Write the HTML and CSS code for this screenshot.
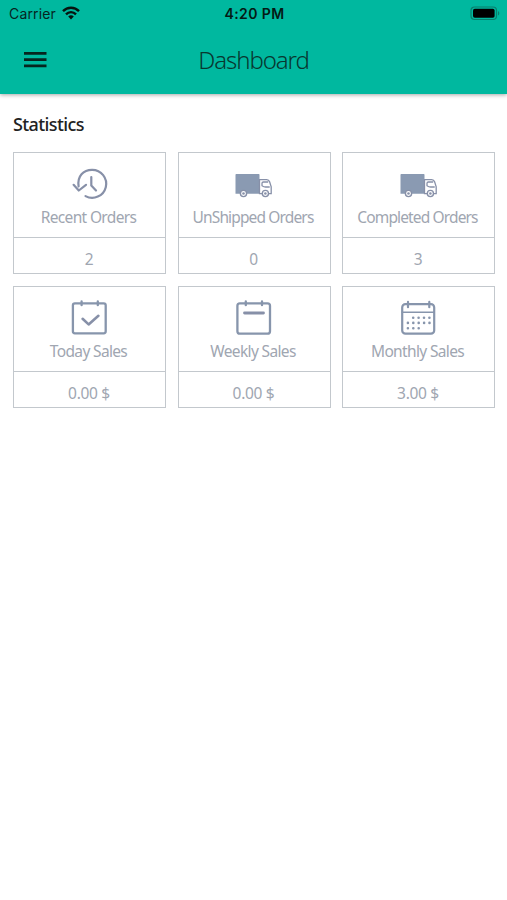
FILE: index.html
```html
<!DOCTYPE html>
<html lang="en">
<head>
<meta charset="utf-8">
<meta name="viewport" content="width=device-width, initial-scale=1">
<title>Dashboard</title>
<link rel="stylesheet" href="styles.css">
</head>
<body>
<header class="header">
  <div class="status">
    <div class="carrier"><span class="carrier-name">Carrier</span>
      <svg class="wifi" width="18" height="14" viewBox="0 0 18 14" fill="none" stroke="#06140f" stroke-width="2.4"><path d="M1 5.200C5.400.6 12.600 .6 17 5.200"/><path d="M4 8.300c2.800-2.900 7.200-2.900 10 0"/><path d="M6.200 10.400c1.700-1.500 3.900-1.500 5.600 0L9 13.400z" fill="#06140f" stroke="none"/></svg>
    </div>
    <span class="time">4:20 PM</span>
    <svg class="battery" width="30" height="15" viewBox="0 0 30 15"><rect x="1" y="1" width="25.500" height="12.500" rx="3.500" fill="none" stroke="#087f6d" stroke-width="1.200"/><rect x="3" y="2.800" width="21.600" height="9" rx="1.800" fill="#000"/><path d="M28 5v4.600c1.800-.8 1.800-3.800 0-4.600z" fill="#087f6d"/></svg>
  </div>
  <div class="toolbar">
    <svg class="menu" width="23" height="16" viewBox="0 0 23 16" fill="#06251f"><path d="M0 0h22.500v2.700H0zM0 6.200h22.500v2.700H0zM0 12.500h22.500v2.700H0z"/></svg>
    <h1 class="title">Dashboard</h1>
  </div>
</header>
<main class="content">
  <h2 class="heading">Statistics</h2>
  <div class="grid">
    <section class="card"><div class="top">
      <svg class="icon" viewBox="0 0 40 40" fill="none" stroke="#8790a8" stroke-width="2.200" stroke-linecap="round" stroke-linejoin="round"><path d="M9.600 23.500C8 13 14.500 6.800 23 6.800a14 14 0 1 1-6.500 26.300"/><path d="M4.600 21.800l5.200 5.700 7.200-5.700M22.300 14v8.500l4.700 5"/></svg>
      <span class="label">Recent Orders</span></div><div class="value">2</div></section>
    <section class="card"><div class="top">
      <svg class="icon" viewBox="0 0 40 40"><path d="M3.500 11h22c.7 0 1 .4 1 1v18.700H2.500V12c0-.6.4-1 1-1z" fill="#8a9ab2"/><path d="M26.500 16.600h7.200c1.500 0 2.400.8 2.900 2.200l1.600 5v6.900H26.500zM35.200 19h-4.800c-1 0-1.400.5-1.400 1.200v2.500c1.200.8 2 1.300 3.500 1.300h4.200" fill="#fff" stroke="#8790a8" stroke-width="1.300"/><g fill="#fff" stroke="#8790a8" stroke-width="1.400"><circle cx="10.500" cy="30.500" r="3.100"/><circle cx="32.400" cy="30.500" r="3.100"/></g><g fill="#8790a8"><circle cx="10.500" cy="30.500" r="1.300"/><circle cx="32.400" cy="30.500" r="1.300"/></g></svg>
      <span class="label long">UnShipped Orders</span></div><div class="value">0</div></section>
    <section class="card"><div class="top">
      <svg class="icon" viewBox="0 0 40 40"><path d="M3.500 11h22c.7 0 1 .4 1 1v18.700H2.500V12c0-.6.4-1 1-1z" fill="#8a9ab2"/><path d="M26.500 16.600h7.200c1.500 0 2.400.8 2.900 2.200l1.600 5v6.900H26.500zM35.200 19h-4.800c-1 0-1.400.5-1.400 1.200v2.500c1.200.8 2 1.300 3.500 1.300h4.200" fill="#fff" stroke="#8790a8" stroke-width="1.300"/><g fill="#fff" stroke="#8790a8" stroke-width="1.400"><circle cx="10.500" cy="30.500" r="3.100"/><circle cx="32.400" cy="30.500" r="3.100"/></g><g fill="#8790a8"><circle cx="10.500" cy="30.500" r="1.300"/><circle cx="32.400" cy="30.500" r="1.300"/></g></svg>
      <span class="label long">Completed Orders</span></div><div class="value">3</div></section>
    <section class="card"><div class="top">
      <svg class="icon" viewBox="0 0 40 40" fill="none" stroke="#8795ac" stroke-width="2.300" stroke-linecap="round" stroke-linejoin="round"><rect x="3.900" y="6.300" width="32.800" height="30" rx="2"/><path d="M12.600 4.400v3.800M28.800 4.400v3.800"/><path d="M13.600 21.800l6 5.600 9.800-8.600" stroke-width="2.600" stroke="#8790a8"/></svg>
      <span class="label">Today Sales</span></div><div class="value">0.00 $</div></section>
    <section class="card"><div class="top">
      <svg class="icon" viewBox="0 0 40 40" fill="none" stroke="#8795ac" stroke-width="2.300" stroke-linecap="round" stroke-linejoin="round"><rect x="4.400" y="6.300" width="32.600" height="30.400" rx="2.500"/><path d="M12.800 4.400v3.800M29 4.400v3.800"/><path d="M11.500 16h19" stroke-width="2.800" stroke="#8790a8"/></svg>
      <span class="label">Weekly Sales</span></div><div class="value">0.00 $</div></section>
    <section class="card"><div class="top">
      <svg class="icon" viewBox="0 0 40 40" fill="none" stroke="#8795ac" stroke-width="2.200" stroke-linecap="round" stroke-linejoin="round"><rect x="4.200" y="7.200" width="32" height="29.500" rx="3.200"/><path d="M4.200 15.300h32" stroke-width="1.600"/><path d="M10 4.900v5.300M31.300 4.900v5.300"/><path d="M15.200 20.800h17M9.900 25.900h23M9.900 31.300h13" stroke-width="2.600" stroke-dasharray="0 5.400"/></svg>
      <span class="label">Monthly Sales</span></div><div class="value">3.00 $</div></section>
  </div>
</main>
</body>
</html>
```
FILE: styles.css
```css
* { box-sizing: border-box; }
body { margin: 0; background: #fff; font-family: "Noto Sans", sans-serif; }
.header { height: 94px; background: #00b89f; box-shadow: 0 1px 4px rgba(0, 0, 0, .35); }
.status { height: 27px; padding: 0 7px 0 9px; display: grid; grid-template-columns: 1fr auto 1fr; align-items: center; font-family: Inter, sans-serif; color: #06251f; }
.carrier { display: flex; align-items: center; gap: 6px; font-size: 14px; }
.carrier-name { letter-spacing: .15px; }
.wifi { margin-top: -1px; }
.time { font-size: 14px; font-weight: 600; letter-spacing: .4px; color: #041a15; }
.battery { justify-self: end; }
.toolbar { height: 66px; padding: 0 24px; display: grid; grid-template-columns: 1fr auto 1fr; align-items: center; }
.title { margin: 0; font-size: 24px; line-height: 32px; font-weight: 350; letter-spacing: -1.1px; color: #08372f; }
.content { padding: 18px 12px 0 13px; }
.heading { margin: 0; font-size: 18px; line-height: 25px; font-weight: 500; letter-spacing: -.6px; color: #222; height: 40px; }
.grid { display: grid; grid-template-columns: repeat(3, 153px); justify-content: space-between; gap: 12px 0; }
.card { height: 122px; border: 1px solid #c3c8cd; }
.top { height: 85px; padding: 10px 2px 0 0; border-bottom: 1px solid #c3c8cd; display: flex; flex-direction: column; align-items: center; }
.icon { width: 40px; height: 40px; flex: none; }
.label { font-size: 15.5px; line-height: 24px; margin-top: 2px; white-space: nowrap; color: #a0a6b1; letter-spacing: -.65px; }
.long { letter-spacing: -.86px; }
.value { height: 35px; padding: 9px 1px 0 0; text-align: center; font-size: 15.5px; line-height: 24px; color: #a0a6b1; letter-spacing: -.3px; }
```
